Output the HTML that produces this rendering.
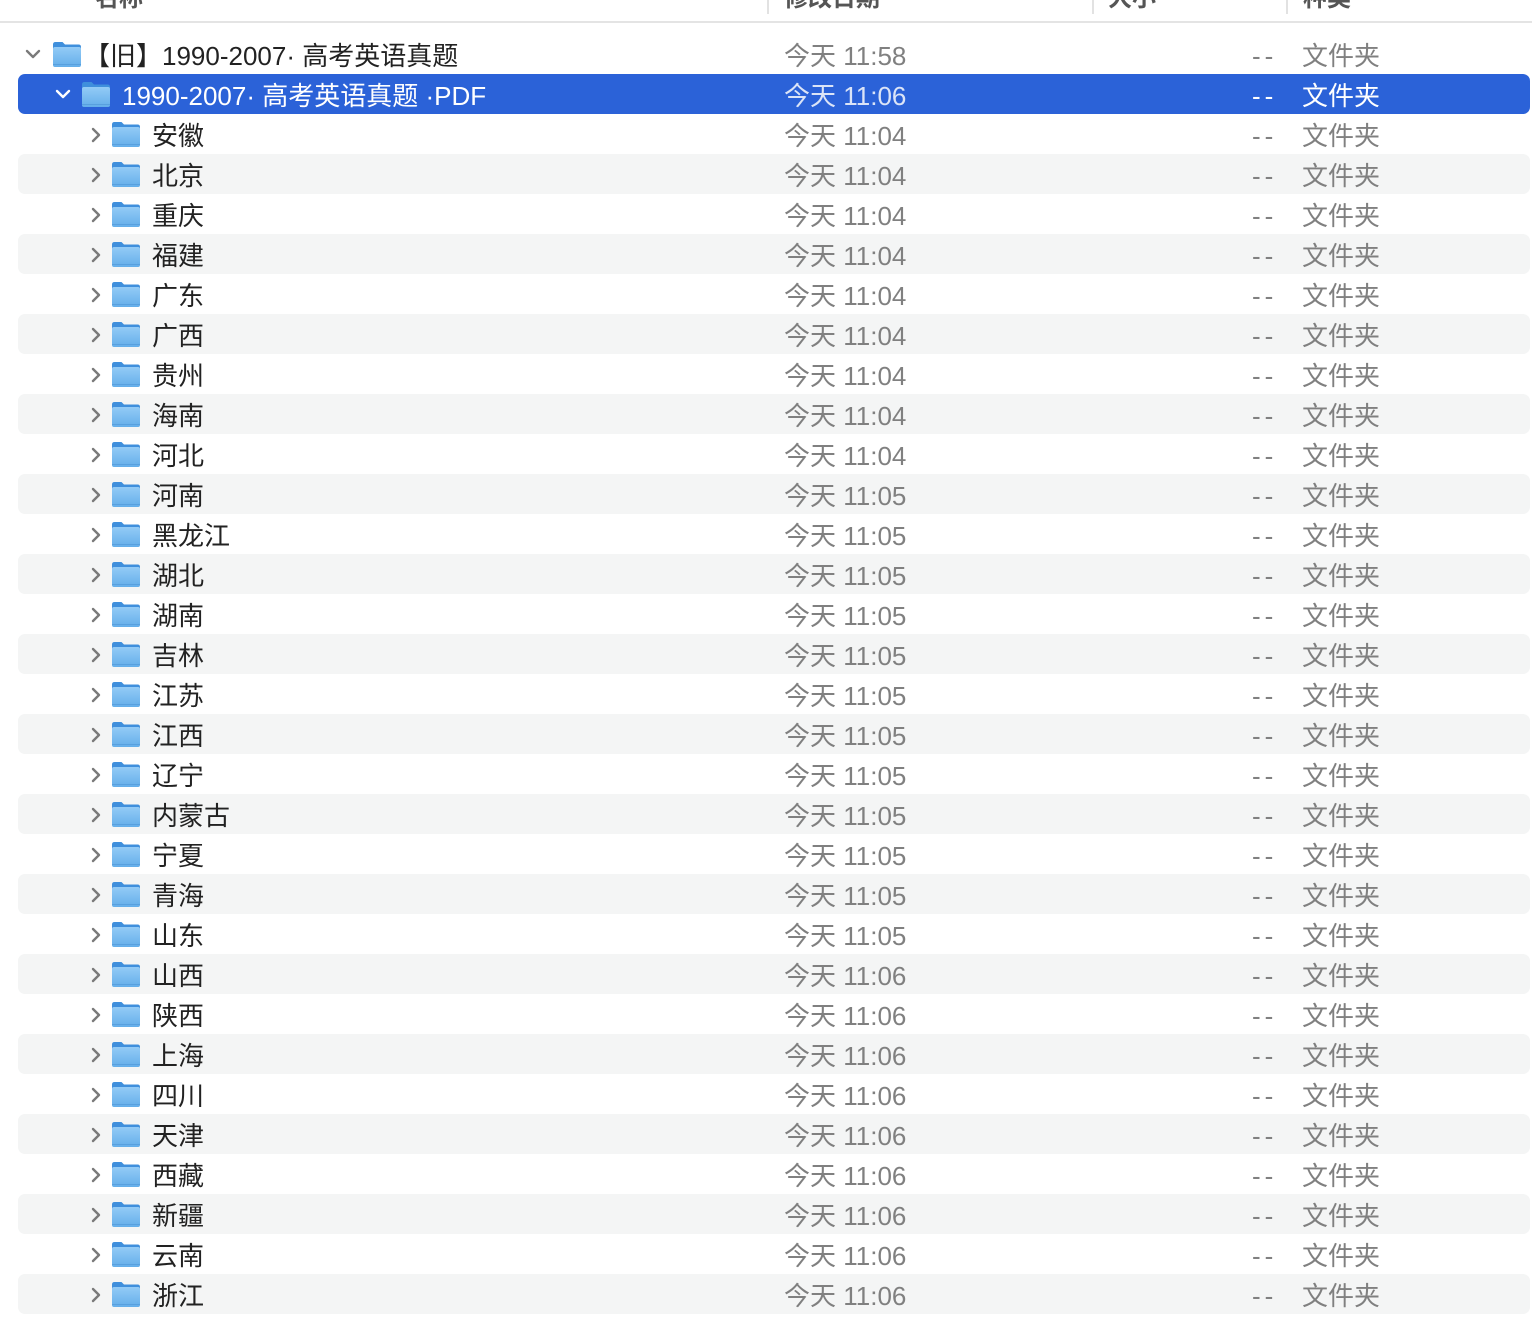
<!DOCTYPE html>
<html><head><meta charset="utf-8"><style>
*{margin:0;padding:0;box-sizing:border-box}
body{width:1532px;height:1318px;background:#fff;position:relative;overflow:hidden;font-family:"Liberation Sans","Noto Sans CJK SC",sans-serif;font-size:26px;}
.hdr{position:absolute;top:0;left:0;width:1532px;height:23px;border-bottom:2px solid #e4e4e4;overflow:hidden}
.hdr span{position:absolute;top:-22px;font-size:24px;color:#555;font-weight:bold}
.sep{position:absolute;top:0;width:2px;height:14px;background:#e2e2e2}
.r{position:absolute;left:18px;width:1512px;height:40px;border-radius:7px;}
.s{background:#f4f5f5}
.sel{background:#2b62d8}
.r div{position:absolute;top:0;line-height:44px;white-space:nowrap}
.n{color:#222}
.d{left:766px;color:#808080}
.z{left:1234px;color:#808080;letter-spacing:4px}
.k{left:1284px;color:#808080}
.sel .n,.sel .z,.sel .k{color:#fff}
.sel .d{color:#dbe4f7}
.c{position:absolute;top:13px;}
.f{position:absolute;top:7px;width:30px;height:27px}
</style></head><body>
<div class="hdr">
<span style="left:95px">名称</span>
<span style="left:784px">修改日期</span>
<span style="left:1108px">大小</span>
<span style="left:1303px">种类</span>
<div class="sep" style="left:767px"></div>
<div class="sep" style="left:1092px"></div>
<div class="sep" style="left:1286px"></div>
</div>
<svg width="0" height="0" style="position:absolute"><defs>
<linearGradient id="g" x1="0" y1="0" x2="0" y2="1"><stop offset="0" stop-color="#93cbf6"/><stop offset="1" stop-color="#64aeea"/></linearGradient>
<symbol id="fo" viewBox="0 0 30 27"><path d="M1 3.5Q1 1 3.5 1H10.5L13 3.5H26.5Q29 3.5 29 6V8H1Z" fill="#3f8fdc"/><rect x="1" y="6" width="28" height="20" rx="2" fill="url(#g)"/><rect x="1" y="23" width="28" height="1" fill="#4d94d6" opacity=".6"/></symbol>
<symbol id="cr" viewBox="0 0 12 16"><path d="M3 2L9 8L3 14" fill="none" stroke="#7a7a7a" stroke-width="2.4" stroke-linecap="round" stroke-linejoin="round"/></symbol>
<symbol id="cd" viewBox="0 0 16 12"><path d="M2 3L8 9L14 3" fill="none" stroke="#7a7a7a" stroke-width="2.4" stroke-linecap="round" stroke-linejoin="round"/></symbol>
<symbol id="cdw" viewBox="0 0 16 12"><path d="M2 3L8 9L14 3" fill="none" stroke="#fff" stroke-width="2.4" stroke-linecap="round" stroke-linejoin="round"/></symbol>
</defs></svg>

<div class="r" style="top:34px"><svg class="c" style="left:7px;top:14px" width="16" height="12"><use href="#cd"/></svg><svg class="f" style="left:34px"><use href="#fo"/></svg><div class="n" style="left:66px">【旧】1990-2007· 高考英语真题</div><div class="d">今天 11:58</div><div class="z">--</div><div class="k">文件夹</div></div>
<div class="r sel" style="top:74px"><svg class="c" style="left:37px;top:14px" width="16" height="12"><use href="#cdw"/></svg><svg class="f" style="left:63px"><use href="#fo"/></svg><div class="n" style="left:104px">1990-2007· 高考英语真题 ·PDF</div><div class="d">今天 11:06</div><div class="z">--</div><div class="k">文件夹</div></div>

<div class="r" style="top:114px"><svg class="c" style="left:72px" width="12" height="16"><use href="#cr"/></svg><svg class="f" style="left:93px"><use href="#fo"/></svg><div class="n" style="left:134px">安徽</div><div class="d">今天 11:04</div><div class="z">--</div><div class="k">文件夹</div></div>
<div class="r s" style="top:154px"><svg class="c" style="left:72px" width="12" height="16"><use href="#cr"/></svg><svg class="f" style="left:93px"><use href="#fo"/></svg><div class="n" style="left:134px">北京</div><div class="d">今天 11:04</div><div class="z">--</div><div class="k">文件夹</div></div>
<div class="r" style="top:194px"><svg class="c" style="left:72px" width="12" height="16"><use href="#cr"/></svg><svg class="f" style="left:93px"><use href="#fo"/></svg><div class="n" style="left:134px">重庆</div><div class="d">今天 11:04</div><div class="z">--</div><div class="k">文件夹</div></div>
<div class="r s" style="top:234px"><svg class="c" style="left:72px" width="12" height="16"><use href="#cr"/></svg><svg class="f" style="left:93px"><use href="#fo"/></svg><div class="n" style="left:134px">福建</div><div class="d">今天 11:04</div><div class="z">--</div><div class="k">文件夹</div></div>
<div class="r" style="top:274px"><svg class="c" style="left:72px" width="12" height="16"><use href="#cr"/></svg><svg class="f" style="left:93px"><use href="#fo"/></svg><div class="n" style="left:134px">广东</div><div class="d">今天 11:04</div><div class="z">--</div><div class="k">文件夹</div></div>
<div class="r s" style="top:314px"><svg class="c" style="left:72px" width="12" height="16"><use href="#cr"/></svg><svg class="f" style="left:93px"><use href="#fo"/></svg><div class="n" style="left:134px">广西</div><div class="d">今天 11:04</div><div class="z">--</div><div class="k">文件夹</div></div>
<div class="r" style="top:354px"><svg class="c" style="left:72px" width="12" height="16"><use href="#cr"/></svg><svg class="f" style="left:93px"><use href="#fo"/></svg><div class="n" style="left:134px">贵州</div><div class="d">今天 11:04</div><div class="z">--</div><div class="k">文件夹</div></div>
<div class="r s" style="top:394px"><svg class="c" style="left:72px" width="12" height="16"><use href="#cr"/></svg><svg class="f" style="left:93px"><use href="#fo"/></svg><div class="n" style="left:134px">海南</div><div class="d">今天 11:04</div><div class="z">--</div><div class="k">文件夹</div></div>
<div class="r" style="top:434px"><svg class="c" style="left:72px" width="12" height="16"><use href="#cr"/></svg><svg class="f" style="left:93px"><use href="#fo"/></svg><div class="n" style="left:134px">河北</div><div class="d">今天 11:04</div><div class="z">--</div><div class="k">文件夹</div></div>
<div class="r s" style="top:474px"><svg class="c" style="left:72px" width="12" height="16"><use href="#cr"/></svg><svg class="f" style="left:93px"><use href="#fo"/></svg><div class="n" style="left:134px">河南</div><div class="d">今天 11:05</div><div class="z">--</div><div class="k">文件夹</div></div>
<div class="r" style="top:514px"><svg class="c" style="left:72px" width="12" height="16"><use href="#cr"/></svg><svg class="f" style="left:93px"><use href="#fo"/></svg><div class="n" style="left:134px">黑龙江</div><div class="d">今天 11:05</div><div class="z">--</div><div class="k">文件夹</div></div>
<div class="r s" style="top:554px"><svg class="c" style="left:72px" width="12" height="16"><use href="#cr"/></svg><svg class="f" style="left:93px"><use href="#fo"/></svg><div class="n" style="left:134px">湖北</div><div class="d">今天 11:05</div><div class="z">--</div><div class="k">文件夹</div></div>
<div class="r" style="top:594px"><svg class="c" style="left:72px" width="12" height="16"><use href="#cr"/></svg><svg class="f" style="left:93px"><use href="#fo"/></svg><div class="n" style="left:134px">湖南</div><div class="d">今天 11:05</div><div class="z">--</div><div class="k">文件夹</div></div>
<div class="r s" style="top:634px"><svg class="c" style="left:72px" width="12" height="16"><use href="#cr"/></svg><svg class="f" style="left:93px"><use href="#fo"/></svg><div class="n" style="left:134px">吉林</div><div class="d">今天 11:05</div><div class="z">--</div><div class="k">文件夹</div></div>
<div class="r" style="top:674px"><svg class="c" style="left:72px" width="12" height="16"><use href="#cr"/></svg><svg class="f" style="left:93px"><use href="#fo"/></svg><div class="n" style="left:134px">江苏</div><div class="d">今天 11:05</div><div class="z">--</div><div class="k">文件夹</div></div>
<div class="r s" style="top:714px"><svg class="c" style="left:72px" width="12" height="16"><use href="#cr"/></svg><svg class="f" style="left:93px"><use href="#fo"/></svg><div class="n" style="left:134px">江西</div><div class="d">今天 11:05</div><div class="z">--</div><div class="k">文件夹</div></div>
<div class="r" style="top:754px"><svg class="c" style="left:72px" width="12" height="16"><use href="#cr"/></svg><svg class="f" style="left:93px"><use href="#fo"/></svg><div class="n" style="left:134px">辽宁</div><div class="d">今天 11:05</div><div class="z">--</div><div class="k">文件夹</div></div>
<div class="r s" style="top:794px"><svg class="c" style="left:72px" width="12" height="16"><use href="#cr"/></svg><svg class="f" style="left:93px"><use href="#fo"/></svg><div class="n" style="left:134px">内蒙古</div><div class="d">今天 11:05</div><div class="z">--</div><div class="k">文件夹</div></div>
<div class="r" style="top:834px"><svg class="c" style="left:72px" width="12" height="16"><use href="#cr"/></svg><svg class="f" style="left:93px"><use href="#fo"/></svg><div class="n" style="left:134px">宁夏</div><div class="d">今天 11:05</div><div class="z">--</div><div class="k">文件夹</div></div>
<div class="r s" style="top:874px"><svg class="c" style="left:72px" width="12" height="16"><use href="#cr"/></svg><svg class="f" style="left:93px"><use href="#fo"/></svg><div class="n" style="left:134px">青海</div><div class="d">今天 11:05</div><div class="z">--</div><div class="k">文件夹</div></div>
<div class="r" style="top:914px"><svg class="c" style="left:72px" width="12" height="16"><use href="#cr"/></svg><svg class="f" style="left:93px"><use href="#fo"/></svg><div class="n" style="left:134px">山东</div><div class="d">今天 11:05</div><div class="z">--</div><div class="k">文件夹</div></div>
<div class="r s" style="top:954px"><svg class="c" style="left:72px" width="12" height="16"><use href="#cr"/></svg><svg class="f" style="left:93px"><use href="#fo"/></svg><div class="n" style="left:134px">山西</div><div class="d">今天 11:06</div><div class="z">--</div><div class="k">文件夹</div></div>
<div class="r" style="top:994px"><svg class="c" style="left:72px" width="12" height="16"><use href="#cr"/></svg><svg class="f" style="left:93px"><use href="#fo"/></svg><div class="n" style="left:134px">陕西</div><div class="d">今天 11:06</div><div class="z">--</div><div class="k">文件夹</div></div>
<div class="r s" style="top:1034px"><svg class="c" style="left:72px" width="12" height="16"><use href="#cr"/></svg><svg class="f" style="left:93px"><use href="#fo"/></svg><div class="n" style="left:134px">上海</div><div class="d">今天 11:06</div><div class="z">--</div><div class="k">文件夹</div></div>
<div class="r" style="top:1074px"><svg class="c" style="left:72px" width="12" height="16"><use href="#cr"/></svg><svg class="f" style="left:93px"><use href="#fo"/></svg><div class="n" style="left:134px">四川</div><div class="d">今天 11:06</div><div class="z">--</div><div class="k">文件夹</div></div>
<div class="r s" style="top:1114px"><svg class="c" style="left:72px" width="12" height="16"><use href="#cr"/></svg><svg class="f" style="left:93px"><use href="#fo"/></svg><div class="n" style="left:134px">天津</div><div class="d">今天 11:06</div><div class="z">--</div><div class="k">文件夹</div></div>
<div class="r" style="top:1154px"><svg class="c" style="left:72px" width="12" height="16"><use href="#cr"/></svg><svg class="f" style="left:93px"><use href="#fo"/></svg><div class="n" style="left:134px">西藏</div><div class="d">今天 11:06</div><div class="z">--</div><div class="k">文件夹</div></div>
<div class="r s" style="top:1194px"><svg class="c" style="left:72px" width="12" height="16"><use href="#cr"/></svg><svg class="f" style="left:93px"><use href="#fo"/></svg><div class="n" style="left:134px">新疆</div><div class="d">今天 11:06</div><div class="z">--</div><div class="k">文件夹</div></div>
<div class="r" style="top:1234px"><svg class="c" style="left:72px" width="12" height="16"><use href="#cr"/></svg><svg class="f" style="left:93px"><use href="#fo"/></svg><div class="n" style="left:134px">云南</div><div class="d">今天 11:06</div><div class="z">--</div><div class="k">文件夹</div></div>
<div class="r s" style="top:1274px"><svg class="c" style="left:72px" width="12" height="16"><use href="#cr"/></svg><svg class="f" style="left:93px"><use href="#fo"/></svg><div class="n" style="left:134px">浙江</div><div class="d">今天 11:06</div><div class="z">--</div><div class="k">文件夹</div></div>
</body></html>
